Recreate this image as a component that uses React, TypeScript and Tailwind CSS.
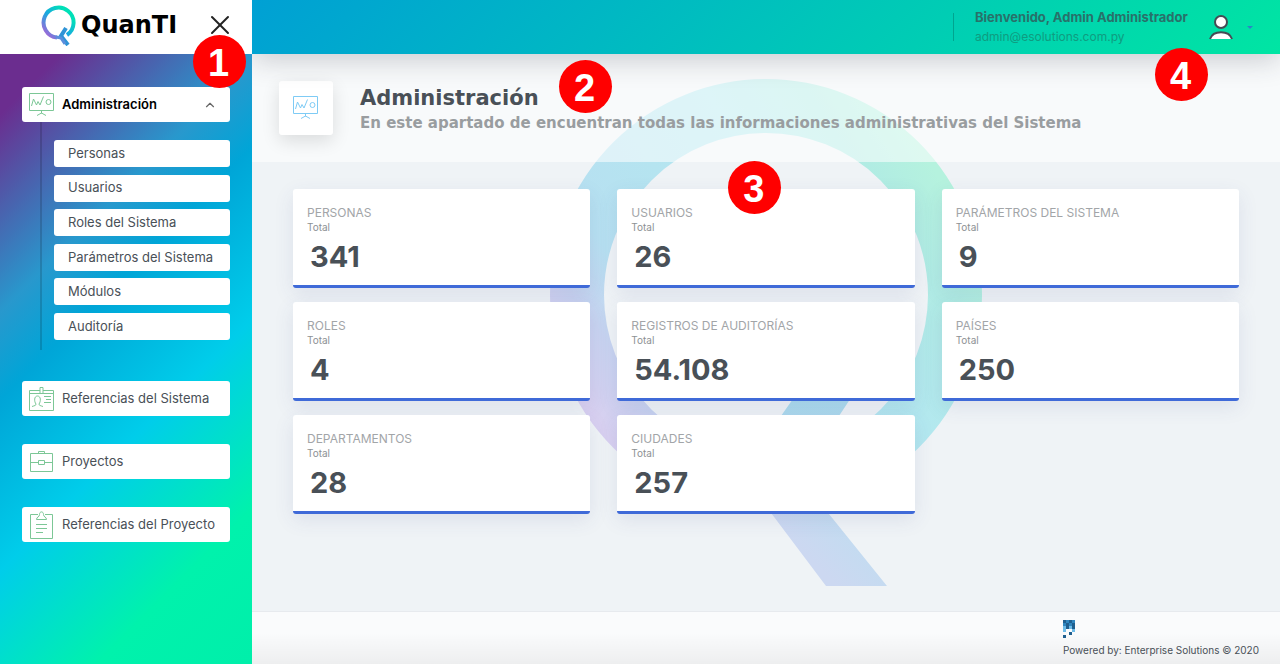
import { ChevronUp, X } from "lucide-react";

type IconProps = { className?: string };

const subItems = [
  "Personas",
  "Usuarios",
  "Roles del Sistema",
  "Parámetros del Sistema",
  "Módulos",
  "Auditoría",
];

const cards = [
  { title: "Personas", total: "341" },
  { title: "Usuarios", total: "26", step: "3" },
  { title: "Parámetros del Sistema", total: "9" },
  { title: "Roles", total: "4" },
  { title: "Registros de Auditorías", total: "54.108" },
  { title: "Países", total: "250" },
  { title: "Departamentos", total: "28" },
  { title: "Ciudades", total: "257" },
];

function BoardIcon({ className }: IconProps) {
  return (
    <svg viewBox="0 0 26 24" className={className} fill="none" stroke="currentColor" aria-hidden="true">
      <path d="M.5 .5h24v17H.5zM12.5 17.5v3M8 22.500l4.500-2.500 4.500 2.500" />
      <path d="M2.500 13l2-7 3 6 1.500-3.500 2 3.500 3.500-8.500" />
      <circle cx="19.500" cy="9" r="2.500" />
    </svg>
  );
}

function BadgeIcon({ className }: IconProps) {
  return (
    <svg viewBox="0 0 26 24" className={className} fill="none" stroke="currentColor" aria-hidden="true">
      <path d="M11 3.500H.5v20h24v-20H14M.5 6.500H11M14 6.500h10.500M11 .5h3v6h-3z" />
      <path d="M3 19.500c3-1 4-1 4-2.500-2-2.500-2-8 1.500-8s3.500 5.500 1.500 8c0 1.500 1 1.500 4 2.500" />
      <path d="M15 9.500h7M17 12.500h5M15 15.500h7" />
    </svg>
  );
}

function CaseIcon({ className }: IconProps) {
  return (
    <svg viewBox="0 0 26 24" className={className} fill="none" stroke="currentColor" aria-hidden="true">
      <path d="M1.500 3.500h22v18h-22zM9.500 3.500v-2h6v2M1.500 12.500h8M15.500 12.500h8M9.500 10.500h6v4h-6z" />
    </svg>
  );
}

function ClipboardIcon({ className }: IconProps) {
  return (
    <svg viewBox="0 0 26 28" className={className} fill="none" stroke="currentColor" aria-hidden="true">
      <path d="M9 3.500H1.500v24h22v-24H16" />
      <path d="M7.500 8.500h10c0-3-3-2-3-5 0-3.500-4-3.500-4 0 0 3-3 2-3 5zM7 13.500h11M7 17.500h11M7 21.500h7" />
    </svg>
  );
}

function LogoMark() {
  return (
    <svg viewBox="0 0 36 42" className="h-[42px] w-9" fill="none" aria-hidden="true">
      <defs>
        <linearGradient id="mark" x1="0" y1="1" x2="1" y2="0">
          <stop offset="0.100" stopColor="#9a6bd8" />
          <stop offset="0.450" stopColor="#1aa7e0" />
          <stop offset="0.800" stopColor="#00e0b8" />
        </linearGradient>
      </defs>
      <path d="M16 33.500A15 15 0 1 1 26 31" stroke="url(#mark)" strokeWidth="4" />
      <path d="M25 24l-5 8 7 9" stroke="#2f93d6" strokeWidth="4" />
      <path d="M15 33l5 1 4 6" stroke="#5b8edc" strokeWidth="3" />
    </svg>
  );
}

function Watermark() {
  return (
    <svg viewBox="0 0 432 508" className="absolute left-1/2 top-[25px] h-[508px] w-[432px] -translate-x-1/2" fill="none" aria-hidden="true">
      <defs>
        <linearGradient id="ring" gradientUnits="userSpaceOnUse" x1="40" y1="330" x2="390" y2="100">
          <stop offset="0" stopColor="#d8d0f0" />
          <stop offset="0.120" stopColor="#c8d3f0" />
          <stop offset="0.240" stopColor="#b7e0f1" />
          <stop offset="0.650" stopColor="#b3e8ef" />
          <stop offset="0.850" stopColor="#b0ebe4" />
          <stop offset="1" stopColor="#b5f2de" />
        </linearGradient>
        <linearGradient id="tail" gradientUnits="userSpaceOnUse" x1="240" y1="460" x2="310" y2="390">
          <stop offset="0" stopColor="#ccd8f1" />
          <stop offset="1" stopColor="#b9dff0" />
        </linearGradient>
        <linearGradient id="hook" x1="0" y1="0" x2="0" y2="1">
          <stop offset="0" stopColor="#a6dbec" />
          <stop offset="1" stopColor="#b9daf0" />
        </linearGradient>
      </defs>
      <circle cx="216" cy="216" r="189" stroke="url(#ring)" strokeWidth="54" />
      <path d="M198 384l66-94h56l-66 100v14h-56z" fill="url(#hook)" />
      <path d="M276 507L194 398q0-8 4-14h56v20l83 103z" fill="url(#tail)" />
    </svg>
  );
}

function CompanyMark() {
  const cells = ["dmdm", "mdmd", "ldld", "l  l", "  d ", "d   "];
  const fills: Record<string, string> = { d: "#1f5f8f", m: "#2f86bf", l: "#6cbbe8" };
  return (
    <svg viewBox="0 0 12 18" className="h-[18px] w-3" aria-hidden="true">
      {cells.map((row, y) =>
        row.split("").map((c, x) =>
          fills[c] ? <rect key={`${x}-${y}`} x={x * 3} y={y * 3} width="3" height="3" fill={fills[c]} /> : null
        )
      )}
    </svg>
  );
}

function Step({ n, className }: { n: string; className: string }) {
  return (
    <span
      className={`absolute z-20 flex size-[53px] items-center justify-center rounded-full bg-[#ff0000] pr-0.5 pt-1 font-['Liberation_Sans',sans-serif] text-[38px] font-bold text-white ${className}`}
    >
      {n}
    </span>
  );
}

export default function App() {
  return (
    <div className="flex min-h-screen bg-[#eff3f6] font-['Inter',sans-serif] text-[#495057]">
      {/* Sidebar */}
      <aside className="relative z-20 flex w-[252px] shrink-0 flex-col">
        <div className="relative flex h-[54px] items-center bg-white pb-1 pl-[41px] pr-4">
          <a href="#" className="flex flex-1 items-center">
            <LogoMark />
            <span className="ml-1 font-['DejaVu_Sans',sans-serif] text-2xl font-bold text-black">QuanTI</span>
          </a>
          <button aria-label="Cerrar menú" className="text-[#222]">
            <X size={32} strokeWidth={1.5} />
          </button>
          <Step n="1" className="left-[193px] top-[35px]" />
        </div>

        <nav className="flex-1 bg-[linear-gradient(135deg,#6b2d8f_0%,#6b2d8f_7%,#2898cd_30%,#00a5d7_40%,#00cdea_60%,#00f2ac_82%,#00efaa_100%)] px-[22px] pt-[33px] text-[13px]">
          <button className="flex h-[35px] w-full items-center rounded-[3px] bg-white pl-[7px] pr-[13px] font-semibold text-black">
            <BoardIcon className="h-6 w-[26px] text-[#7cc796]" />
            <span className="ml-[7px] flex-1 text-left">Administración</span>
            <ChevronUp size={14} className="text-[#666]" />
          </button>

          <ul className="ml-[18px] flex h-[228px] flex-col justify-between border-l-2 border-black/15 pb-2.5 pl-3 pt-[18px]">
            {subItems.map((item) => (
              <li key={item}>
                <a href="#" className="flex h-[27px] items-center rounded-[3px] bg-white px-3.5">
                  {item}
                </a>
              </li>
            ))}
          </ul>

          <div className="mt-[31px] flex flex-col gap-7">
            <button className="flex h-[35px] items-center rounded-[3px] bg-white pl-[7px]">
              <BadgeIcon className="h-6 w-[26px] text-[#7cc796]" />
              <span className="ml-[7px]">Referencias del Sistema</span>
            </button>
            <button className="flex h-[35px] items-center rounded-[3px] bg-white pl-[7px]">
              <CaseIcon className="h-6 w-[26px] text-[#7cc796]" />
              <span className="ml-[7px]">Proyectos</span>
            </button>
            <button className="flex h-[35px] items-center rounded-[3px] bg-white pl-[7px]">
              <ClipboardIcon className="h-7 w-[26px] text-[#7cc796]" />
              <span className="ml-[7px]">Referencias del Proyecto</span>
            </button>
          </div>
        </nav>
      </aside>

      <div className="flex min-w-0 flex-1 flex-col">
        {/* Top bar */}
        <header className="relative z-10 flex h-[54px] items-center justify-end bg-[linear-gradient(135deg,#00a0d4,#00e5a3)] pr-[27px] shadow-[0_6px_28px_rgba(40,40,60,0.22)]">
          <div className="mr-[21px] h-7 w-px bg-black/20" />
          <div className="mr-[21px] w-[213px]">
            <p className="text-[13px] font-bold leading-[19px] text-[#28716a]">Bienvenido, Admin Administrador</p>
            <p className="text-[12px] leading-[19px] text-[#0f9c80]">admin@esolutions.com.py</p>
          </div>
          <button aria-label="Cuenta" className="flex items-center gap-3.5">
            <svg viewBox="0 0 24 26" className="h-[26px] w-6" fill="white" stroke="#454b54" strokeWidth="2" aria-hidden="true">
              <circle cx="12" cy="8" r="6" />
              <path d="M1 25c3-9 19-9 22 0" />
            </svg>
            <span className="border-x-[3px] border-t-[3px] border-x-transparent border-t-[#2b86c5]" />
          </button>
          <Step n="4" className="right-[72px] top-12" />
        </header>

        <main className="relative flex-1">
          <Watermark />

          {/* Page title */}
          <section className="relative flex h-[108px] items-center bg-white/55 px-[27px]">
            <div className="flex size-[54px] items-center justify-center rounded-[3px] bg-white shadow-[0_6px_18px_rgba(0,0,0,0.12)]">
              <BoardIcon className="h-6 w-[26px] text-[#7ecbf5]" />
            </div>
            <div className="ml-[27px] pt-1 font-['DejaVu_Sans',sans-serif] font-bold">
              <h1 className="text-[21px] leading-[26px]">Administración</h1>
              <p className="text-[15px] leading-6 text-[#999da0]">
                En este apartado de encuentran todas las informaciones administrativas del Sistema
              </p>
            </div>
            <Step n="2" className="left-[307px] top-1.5" />
          </section>

          {/* Totals */}
          <section className="relative grid grid-cols-3 gap-x-[27px] gap-y-[14px] px-[41px] pb-24 pt-[27px]">
            {cards.map((card) => (
              <article
                key={card.title}
                className="relative rounded-[3px] border-b-[3px] border-[#3f6ad8] bg-white px-3.5 pb-3 pt-4 shadow-[0_6px_20px_rgba(60,70,140,0.10)]"
              >
                <h2 className="text-[12px] uppercase leading-4 text-[#a2a5a8]">{card.title}</h2>
                <p className="text-[10px] leading-3 text-[#8d9194]">Total</p>
                <p className="pl-[3px] pt-2 text-[29px] font-bold leading-8">{card.total}</p>
                {card.step && <Step n={card.step} className="-top-7 left-[111px]" />}
              </article>
            ))}
          </section>
        </main>

        <footer className="flex h-[53px] justify-end border-t border-[#e7eaee] bg-[#fafbfc] bg-[linear-gradient(to_top,rgba(0,0,0,0.05),transparent_60%)] pr-[21px] pt-2">
          <div className="text-[10px]">
            <CompanyMark />
            <p className="mt-1 leading-4">Powered by: Enterprise Solutions © 2020</p>
          </div>
        </footer>
      </div>
    </div>
  );
}
